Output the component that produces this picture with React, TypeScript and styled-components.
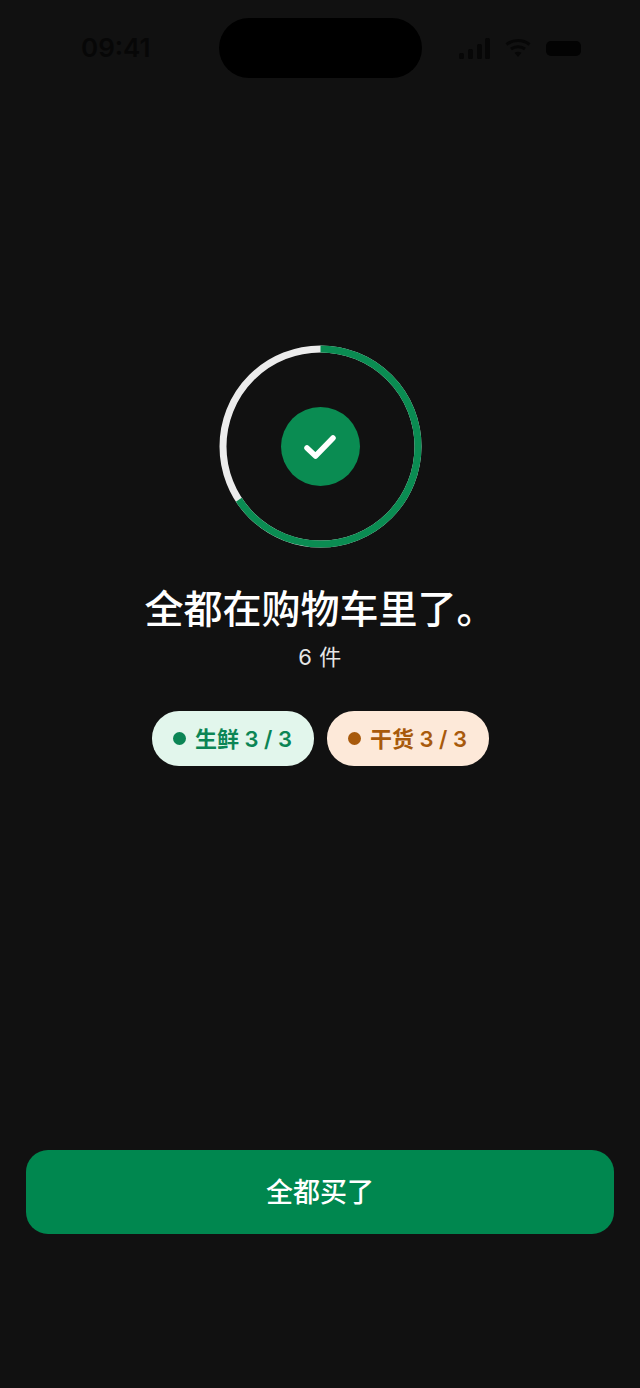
import React from 'react'
import styled, { createGlobalStyle } from 'styled-components'

const GlobalStyle = createGlobalStyle`
  html, body {
    margin: 0;
    padding: 0;
    background: #111111;
  }
  * {
    box-sizing: border-box;
  }
`

const Screen = styled.div`
  width: 640px;
  height: 1388px;
  display: flex;
  flex-direction: column;
  background: #111111;
  font-family: Inter, 'Noto Sans CJK SC', sans-serif;
  overflow: hidden;
`

const StatusBar = styled.div`
  height: 345px;
  padding: 18px 59px 0;
  display: grid;
  grid-template-columns: 1fr 203px 1fr;
  align-items: start;
`

const Clock = styled.span`
  padding-left: 22px;
  margin-top: 14px;
  font-size: 26px;
  line-height: 32px;
  font-weight: 600;
  color: #070707;
`

const Island = styled.div`
  height: 60px;
  border-radius: 30px;
  background: #000000;
`

const StatusIcons = styled.div`
  height: 60px;
  display: flex;
  align-items: center;
  justify-content: flex-end;
  gap: 15px;
`

const Hero = styled.main`
  display: flex;
  flex-direction: column;
  align-items: center;
`

const Ring = styled.div`
  position: relative;
  width: 203px;
  height: 203px;
  display: flex;
  align-items: center;
  justify-content: center;
`

const RingSvg = styled.svg`
  position: absolute;
  inset: 0;
`

const CheckBadge = styled.div`
  width: 79px;
  height: 79px;
  border-radius: 50%;
  background: #0a8c52;
  display: flex;
  align-items: center;
  justify-content: center;
`

const Title = styled.h1`
  margin: 33px 0 0;
  font-size: 39px;
  line-height: 56px;
  font-weight: 500;
  color: #ffffff;
  white-space: nowrap;
`

const Count = styled.p`
  margin: 5px 0 0;
  font-size: 22px;
  line-height: 30px;
  font-weight: 400;
  color: #e6e6e6;
  letter-spacing: 0.5px;
`

const PillRow = styled.div`
  margin-top: 39px;
  display: flex;
  gap: 13px;
`

const Pill = styled.div<{ $bg: string; $fg: string }>`
  width: 162px;
  height: 55px;
  border-radius: 27px;
  display: flex;
  align-items: center;
  justify-content: center;
  gap: 9px;
  background: ${(p) => p.$bg};
  color: ${(p) => p.$fg};
  font-size: 22px;
  font-weight: 600;
  white-space: nowrap;
`

const PillLabel = styled.span`
  margin-bottom: 4px;
`

const Dot = styled.span`
  width: 13px;
  height: 13px;
  border-radius: 50%;
  background: currentColor;
`

const Spacer = styled.div`
  flex: 1;
`

const BuyButton = styled.button`
  margin: 0 26px 154px;
  height: 84px;
  padding: 0 0 4px;
  border: none;
  border-radius: 22px;
  background: #00874f;
  color: #ffffff;
  font-family: inherit;
  font-size: 27px;
  font-weight: 500;
`

const RADIUS = 97.5
const CIRCUMFERENCE = 2 * Math.PI * RADIUS
const PROGRESS = 236.5 / 360

const App: React.FC = () => {
  return (
    <Screen>
      <GlobalStyle />
      <StatusBar>
        <Clock>09:41</Clock>
        <Island />
        <StatusIcons>
          {/* signal */}
          <svg width="31" height="21" viewBox="0 0 31 21" fill="#070707">
            <rect x="0" y="15" width="5" height="6" rx="1.5" />
            <rect x="9" y="11" width="5" height="10" rx="1.5" />
            <rect x="18" y="6" width="5" height="15" rx="1.5" />
            <rect x="26" y="0" width="5" height="21" rx="1.5" />
          </svg>
          {/* wifi */}
          <svg width="26" height="20" viewBox="0 0 26 20" fill="none" stroke="#070707" strokeWidth="3">
            <path d="M1.5 6.5 C8 1 18 1 24.5 6.5" />
            <path d="M6 11 C10 8 16 8 20 11" />
            <path d="M13 19 L9.5 14.8 C11.5 13.4 14.5 13.4 16.5 14.8 Z" fill="#070707" stroke="none" />
          </svg>
          {/* battery */}
          <svg width="35" height="15" viewBox="0 0 35 15" fill="#030303">
            <rect x="0" y="0" width="35" height="15" rx="5" />
          </svg>
        </StatusIcons>
      </StatusBar>
      <Hero>
        <Ring>
          <RingSvg width="203" height="203" viewBox="0 0 203 203" fill="none" strokeWidth="7">
            <circle cx="101.5" cy="101.5" r={RADIUS} stroke="#ececec" />
            <circle
              cx="101.5"
              cy="101.5"
              r={RADIUS}
              stroke="#0a8c52"
              strokeDasharray={`${CIRCUMFERENCE * PROGRESS} ${CIRCUMFERENCE}`}
              transform="rotate(-90 101.5 101.5)"
            />
          </RingSvg>
          <CheckBadge>
            <svg width="34" height="28" viewBox="0 0 34 28" fill="none">
              <path
                d="M4 15 L12.5 23 L30 5"
                stroke="#ffffff"
                strokeWidth="5.5"
                strokeLinecap="round"
                strokeLinejoin="round"
              />
            </svg>
          </CheckBadge>
        </Ring>
        <Title>全都在购物车里了。</Title>
        <Count>6 件</Count>
        <PillRow>
          <Pill $bg="#e2f6ec" $fg="#0b8555">
            <Dot />
            <PillLabel>生鲜 3 / 3</PillLabel>
          </Pill>
          <Pill $bg="#fde9d9" $fg="#a85a0c">
            <Dot />
            <PillLabel>干货 3 / 3</PillLabel>
          </Pill>
        </PillRow>
      </Hero>
      <Spacer />
      <BuyButton>全都买了</BuyButton>
    </Screen>
  )
}

export default App
